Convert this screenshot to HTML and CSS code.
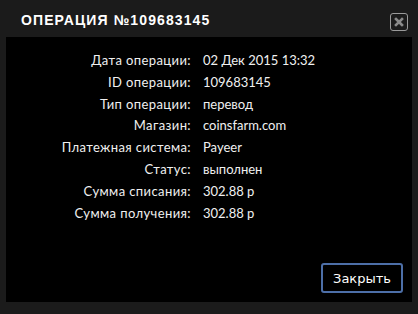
FILE: index.html
```html
<!DOCTYPE html>
<html>
<head>
<meta charset="utf-8">
<link rel="stylesheet" href="styles.css">
</head>
<body>
<div class="dialog">
  <div class="head">
    <div class="title">ОПЕРАЦИЯ №109683145</div>
    <div class="close">
      <svg width="10" height="10" viewBox="0 0 10 10"><path d="M2 2L8 8M8 2L2 8" stroke="#8a8a8a" stroke-width="2.6" stroke-linecap="square"/></svg>
    </div>
  </div>
  <div class="panel">
    <div class="rows">
      <div class="lbl">Дата операции:</div><div class="val">02 Дек 2015 13:32</div>
      <div class="lbl">ID операции:</div><div class="val">109683145</div>
      <div class="lbl">Тип операции:</div><div class="val">перевод</div>
      <div class="lbl">Магазин:</div><div class="val">coinsfarm.com</div>
      <div class="lbl">Платежная система:</div><div class="val">Payeer</div>
      <div class="lbl">Статус:</div><div class="val">выполнен</div>
      <div class="lbl">Сумма списания:</div><div class="val">302.88 р</div>
      <div class="lbl">Сумма получения:</div><div class="val">302.88 р</div>
    </div>
    <div class="foot"><button class="btn">Закрыть</button></div>
  </div>
</div>
</body>
</html>
```
FILE: styles.css
```css
html, body { margin: 0; padding: 0; }
body { background: #1b1b1b; width: 418px; height: 314px; overflow: hidden; }
.dialog { padding: 0 6px; }
.head { height: 37px; display: flex; align-items: center; justify-content: space-between; padding: 0 4px 0 15px; }
.title { font-family: "Liberation Sans", Arial, sans-serif; font-weight: bold; font-size: 14px; letter-spacing: 1.1px; color: #fff; margin-top: 2px; }
.close { width: 16px; height: 16px; border: 1px solid #9a9a9a; border-radius: 3px; display: flex; align-items: center; justify-content: center; margin-top: 7px; }
.panel { background: #000; height: 265px; display: flex; flex-direction: column; }
.rows { display: grid; grid-template-columns: 185px 1fr; column-gap: 12px; row-gap: 0; padding-top: 13px; font-family: "Lato", "Open Sans", sans-serif; font-size: 13px; color: #f0f0f0; }
.lbl, .val { line-height: 21.8px; height: 21.8px; }
.lbl { text-align: right; letter-spacing: 0.4px; }
.foot { margin-top: auto; display: flex; justify-content: flex-end; padding: 0 9px 8px 0; }
.btn { background: #000; color: #fff; border: 2px solid #4d6fa8; border-radius: 3px; width: 82px; height: 30px; font-family: "DejaVu Sans", sans-serif; font-size: 13px; padding: 0; margin-bottom: 1px; }
```
